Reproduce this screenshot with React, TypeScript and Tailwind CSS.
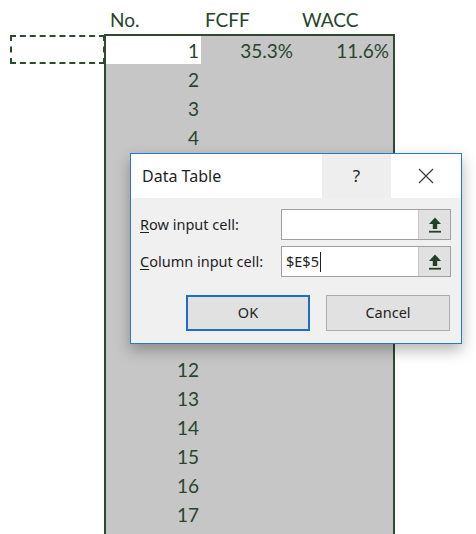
import React from "react";

const rows = Array.from({ length: 17 }, (_, i) => i + 1);

function RefButton() {
  return (
    <div className="w-[32px] h-full bg-[#e1e1e1] border-l border-[#c8c8c8] flex items-center justify-center">
      <svg width="14" height="16" viewBox="0 0 14 16">
        <path d="M7 0.5 L13 7 L9.2 7 L9.2 12 L4.8 12 L4.8 7 L1 7 Z" fill="#23412a" />
        <rect x="1" y="13.8" width="12" height="1.8" fill="#23412a" />
      </svg>
    </div>
  );
}

function DataTableDialog() {
  return (
    <div className="absolute left-[130px] top-[153px] w-[332px] h-[191px] bg-[#f0f0f0] border border-[#2a78c6] shadow-[0_6px_14px_rgba(0,0,0,0.3)] font-['Noto_Sans',sans-serif] text-[#1f1f1f]">
      <div className="h-[44px] bg-white flex items-stretch">
        <div className="flex-1 flex items-center pl-[11px] text-[16px]">Data Table</div>
        <div className="w-[69px] bg-[#eeeeee] flex items-center justify-center text-[17px]">?</div>
        <div className="w-[70px] flex items-center justify-center">
          <svg width="16" height="16" viewBox="0 0 16 16">
            <path d="M1 1 L15 15 M15 1 L1 15" stroke="#3a3a3a" strokeWidth="1.2" />
          </svg>
        </div>
      </div>
      <div className="px-[9px] pt-[11px]">
        <div className="flex items-center h-[31px]">
          <span className="w-[141px] text-[14.5px]">
            <span className="underline underline-offset-2">R</span>ow input cell:
          </span>
          <div className="flex h-full w-[170px] border border-[#a0a0a0] bg-white">
            <div className="flex-1" />
            <RefButton />
          </div>
        </div>
        <div className="flex items-center h-[31px] mt-[6px]">
          <span className="w-[141px] text-[14.5px]">
            <span className="underline underline-offset-2">C</span>olumn input cell:
          </span>
          <div className="flex h-full w-[170px] border border-[#a0a0a0] bg-white">
            <div className="flex-1 flex items-center pl-[4px] text-[14.5px]">
              $E$5<span className="inline-block w-px h-[20px] bg-[#222] ml-[1px]" />
            </div>
            <RefButton />
          </div>
        </div>
        <div className="flex gap-[16px] mt-[18px] pl-[46px]">
          <div className="w-[124px] h-[36px] bg-[#e1e1e1] border-2 border-[#1f6fc1] flex items-center justify-center text-[14.5px]">
            OK
          </div>
          <div className="w-[124px] h-[36px] bg-[#e1e1e1] border border-[#adadad] flex items-center justify-center text-[14.5px]">
            Cancel
          </div>
        </div>
      </div>
    </div>
  );
}

export default function App() {
  return (
    <div className="relative w-[476px] h-[534px] bg-white overflow-hidden font-['Lato',sans-serif] text-[#27452c]">
      <div className="flex h-[34px] pl-[106px] text-[19px] items-end">
        <div className="w-[96px] pl-[4px] leading-[29px]">No.</div>
        <div className="w-[96px] pl-[3px] leading-[29px]">FCFF</div>
        <div className="w-[96px] pl-[4px] leading-[29px]">WACC</div>
      </div>

      <div className="ml-[104px] w-[291px] h-[500px] border-2 border-b-0 border-[#2e4a31] bg-[#c6c6c6] text-[19px]">
        {rows.map((n) => (
          <div key={n} className={`flex ${n === 1 ? "h-[28px]" : "h-[29px]"}`}>
            <div
              className={`w-[95px] flex items-end justify-end pr-[2px] pb-[3px] leading-[20px] ${
                n === 1 ? "bg-white" : ""
              }`}
            >
              {n <= 4 || n >= 12 ? n : ""}
            </div>
            <div className="w-[96px] flex items-end justify-end pr-[4px] pb-[3px] leading-[20px]">
              {n === 1 ? "35.3%" : ""}
            </div>
            <div className="w-[96px] flex items-end justify-end pr-[4px] pb-[3px] leading-[20px]">
              {n === 1 ? "11.6%" : ""}
            </div>
          </div>
        ))}
      </div>

      <div className="absolute left-[10px] top-[35px] w-[95px] h-[29px] border-2 border-dashed border-[#2e4a31]" />

      <DataTableDialog />
    </div>
  );
}
